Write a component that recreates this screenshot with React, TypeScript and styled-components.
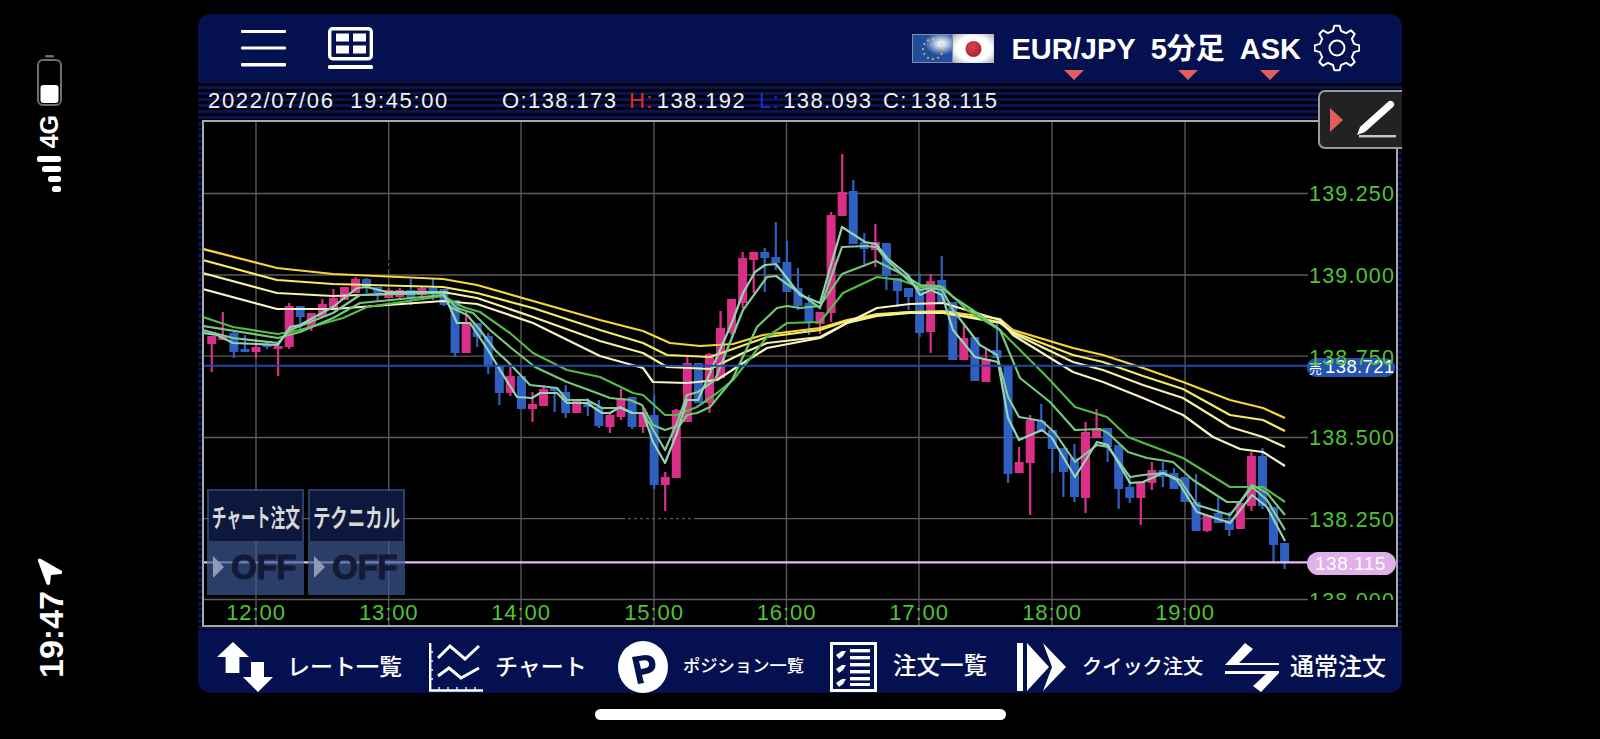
import React from "react";
import styled, { createGlobalStyle } from "styled-components";

const NAVY = "#04104f";
const SANS = '"Liberation Sans", Arial, sans-serif';
const JP = '"Liberation Sans", "Noto Sans CJK JP", sans-serif';

const Global = createGlobalStyle`
  html, body { margin: 0; padding: 0; background: #000; }
  #root { width: 1600px; height: 739px; overflow: hidden; }
`;

const Page = styled.div`
  width: 1600px;
  height: 739px;
  background: #000;
  display: flex;
  color: #fff;
  font-family: ${SANS};
`;

const StatusRail = styled.div`
  width: 198px;
  flex: none;
  display: flex;
  flex-direction: column;
  padding: 54px 0 61px 37px;
  box-sizing: border-box;
`;

const RailTime = styled.div`
  writing-mode: vertical-rl;
  transform: rotate(180deg);
  font-size: 34px;
  font-weight: 700;
  line-height: 26px;
  width: 26px;
  margin-top: 5px;
  margin-left: 1px;
`;

const RailNet = styled.div`
  writing-mode: vertical-rl;
  transform: rotate(180deg);
  font-size: 25px;
  font-weight: 700;
  line-height: 24px;
  width: 24px;
  margin-top: 9px;
`;

const Center = styled.div`
  width: 1204px;
  flex: none;
  display: flex;
  flex-direction: column;
  align-items: center;
  padding-top: 14px;
  box-sizing: border-box;
`;

const Panel = styled.div`
  position: relative;
  width: 1204px;
  height: 679px;
  flex: none;
  display: flex;
  flex-direction: column;
  border-radius: 13px;
  overflow: hidden;
  background: repeating-linear-gradient(180deg, #0a1550 0 3px, #02030f 3px 6px);
`;

const HomeBar = styled.div`
  width: 411px;
  height: 11px;
  border-radius: 6px;
  background: #fff;
  margin-top: 16px;
  flex: none;
`;

const Header = styled.header`
  height: 68px;
  flex: none;
  background: ${NAVY};
  display: flex;
  align-items: center;
  padding: 0 42px 0 43px;
`;

const HeaderIcons = styled.div`
  display: flex;
  align-items: center;
  gap: 42px;
  margin-right: auto;
`;

const Selector = styled.div<{ $ml: number }>`
  position: relative;
  font-size: 29px;
  font-weight: 700;
  font-family: ${JP};
  line-height: 34px;
  margin-left: ${(p) => p.$ml}px;
  top: 1px;
  white-space: nowrap;
  &::after {
    content: "";
    position: absolute;
    left: 50%;
    top: 38px;
    transform: translateX(-50%);
    border-left: 10px solid transparent;
    border-right: 10px solid transparent;
    border-top: 10px solid #df5f5a;
  }
`;

const GearSlot = styled.div`
  margin-left: 13px;
  display: flex;
`;

const InfoStrip = styled.div`
  height: 38px;
  flex: none;
  display: flex;
  align-items: center;
  padding: 0 0 0 10px;
  font-size: 22px;
  letter-spacing: 1.4px;
  white-space: pre;
  color: #f2f2f2;
`;

const InfoCell = styled.span<{ $w: number; $ls?: number }>`
  display: inline-block;
  width: ${(p) => p.$w}px;
  flex: none;
  ${(p) => (p.$ls ? `letter-spacing: ${p.$ls}px;` : "")}
`;

const Mark = styled.span<{ $c: string }>`
  color: ${(p) => p.$c};
  margin-right: 3px;
`;

const PenButton = styled.div`
  position: absolute;
  right: -8px;
  top: 76px;
  width: 92px;
  height: 59px;
  box-sizing: border-box;
  background: #222;
  border: 2px solid #9a9a9a;
  border-radius: 7px;
  display: flex;
  align-items: center;
  padding-left: 10px;
  gap: 13px;
`;

const PenCaret = styled.div`
  width: 0;
  height: 0;
  border-top: 12px solid transparent;
  border-bottom: 12px solid transparent;
  border-left: 13px solid #df5f5a;
`;

const ChartFrame = styled.div`
  position: relative;
  margin: 0 4px;
  width: 1196px;
  height: 507px;
  flex: none;
  box-sizing: border-box;
  border: 2px solid #a8a8a8;
  background: #000;
  & > svg { display: block; }
`;

const Toggles = styled.div`
  position: absolute;
  left: 3px;
  top: 367px;
  display: flex;
  gap: 4px;
`;

const Toggle = styled.div`
  width: 97px;
  height: 106px;
  box-sizing: border-box;
  display: flex;
  flex-direction: column;
  background: rgba(62, 92, 152, 0.68);
  padding: 2px;
`;

const ToggleTitle = styled.div<{ $sx: number }>`
  height: 50px;
  flex: none;
  background: rgba(10, 20, 55, 0.9);
  display: flex;
  align-items: center;
  justify-content: center;
  overflow: hidden;
  & > span {
    font-family: ${JP};
    font-weight: 700;
    font-size: 21px;
    color: #d8d8d8;
    white-space: nowrap;
    transform: scale(${(p) => p.$sx}, 1.2);
  }
`;

const ToggleState = styled.div`
  flex: 1;
  display: flex;
  align-items: center;
  padding-left: 4px;
  gap: 7px;
  & > b {
    font-family: ${SANS};
    font-size: 35px;
    font-weight: 700;
    color: #121a36;
    -webkit-text-stroke: 1px #121a36;
    letter-spacing: -0.5px;
    transform: scaleX(0.95);
    transform-origin: left;
  }
`;

const ToggleCaret = styled.div`
  width: 0;
  height: 0;
  border-top: 11px solid transparent;
  border-bottom: 11px solid transparent;
  border-left: 11px solid #8d9ab8;
`;

const Footer = styled.nav`
  margin-top: 3px;
  flex: 1;
  box-sizing: border-box;
  background: ${NAVY};
  display: flex;
  align-items: center;
  padding: 11px 0 0 19px;
`;

const NavItem = styled.div<{ $w: number; $gap: number }>`
  width: ${(p) => p.$w}px;
  flex: none;
  display: flex;
  align-items: center;
  gap: ${(p) => p.$gap}px;
`;

const NavLabel = styled.span<{ $s: number }>`
  font-family: ${JP};
  font-size: ${(p) => p.$s}px;
  font-weight: 500;
  line-height: 1;
  white-space: nowrap;
  color: #fff;
`;

/* ------- chart data (screen pixels of the reference) ------- */
type C = ["p" | "b", number, number, number, number];
const CANDLES: C[] = [
  ["p",336,336,344,372],["p",312,337,340,340],["b",330,333,352,358],["b",335,349,352,352],["p",339,347,352,358],
  ["b",342,345,347,349],["p",346,346,349,376],["p",303,306,347,349],["b",306,306,317,333],["p",313,313,327,331],
  ["p",299,304,317,317],["p",289,298,308,308],["p",287,287,300,300],["p",277,279,293,293],["b",278,279,287,293],
  ["b",287,287,293,301],["p",288,290,298,298],["p",288,290,297,300],["b",279,290,298,305],["p",287,288,295,297],
  ["b",279,288,293,300],["b",289,289,305,306],["b",300,300,353,357],["p",312,323,353,353],["b",323,323,337,347],
  ["b",333,336,367,374],["b",365,365,393,405],["p",367,376,393,396],["b",376,376,409,409],["p",392,404,409,422],
  ["p",385,389,406,406],["b",388,388,391,412],["b",385,392,413,418],["p",400,400,413,413],["b",398,402,407,416],
  ["b",400,407,426,428],["p",413,415,427,433],["p",389,398,417,420],["b",397,397,427,429],["p",408,412,427,433],
  ["b",395,415,485,489],["p",472,477,485,511],["p",409,410,478,478],["p",357,363,422,422],["b",363,363,403,403],
  ["p",353,354,403,413],["p",311,328,378,378],["p",299,299,333,335],["p",252,258,303,308],["p",252,252,260,293],
  ["b",248,252,258,292],["b",222,257,263,270],["b",241,262,292,292],["b",268,288,306,310],["b",295,303,322,335],
  ["p",312,312,324,334],["p",212,215,313,322],["p",154,192,216,216],["b",180,191,244,244],["b",233,242,249,264],
  ["p",224,242,250,267],["b",243,243,276,290],["b",278,278,291,307],["b",288,288,297,310],["b",273,287,333,337],
  ["p",274,281,332,353],["b",256,280,303,303],["b",302,302,360,360],["p",325,338,360,360],["b",337,337,381,381],
  ["p",349,359,382,382],["b",324,350,358,358],["b",366,366,474,483],["p",447,462,473,473],["p",415,420,463,515],
  ["b",404,421,432,432],["b",430,430,449,473],["b",448,448,472,497],["b",444,458,497,502],["p",422,432,498,513],
  ["p",409,429,438,438],["b",428,428,447,462],["b",445,445,489,509],["b",478,487,498,503],["p",482,482,498,525],
  ["p",462,470,483,490],["b",462,470,477,487],["b",468,473,489,489],["b",477,477,502,502],["b",474,502,531,531],
  ["p",515,515,531,532],["b",498,513,523,523],["b",512,520,530,536],["p",503,503,529,529],["p",452,456,506,511],
  ["b",448,456,506,509],["b",507,507,545,562],["b",543,543,562,569],
];

const Y1 = "203,249 277,268 333,274 443,279 477,285 533,301 600,320 643,331 670,343 700,346 733,344 763,335 820,328 847,320 877,314 910,312 943,311 1000,319 1013,330 1073,348 1103,355 1143,368 1183,382 1230,400 1263,408 1285,418";
const Y2 = "203,260 277,280 333,284 443,287 477,293 533,308 600,330 643,343 667,355 710,357 767,337 820,330 847,321 877,315 910,312 943,312 1000,322 1013,332 1073,355 1103,362 1143,376 1183,389 1230,415 1263,420 1285,431";
const Y3 = "203,273 277,293 333,296 443,292 477,298 533,317 600,341 643,353 667,367 710,369 743,353 767,343 820,337 847,323 877,316 910,313 943,313 1000,323 1013,333 1073,362 1103,370 1143,385 1183,398 1230,427 1263,437 1285,447";
const Y4 = "203,289 277,309 333,309 443,301 477,304 533,323 600,356 643,368 653,382 687,383 717,380 743,363 767,348 820,338 847,323 877,308 910,304 943,303 1000,320 1013,335 1073,372 1103,382 1143,398 1183,415 1213,437 1240,449 1263,452 1285,466";
const G1 = "203,317 233,327 278,334 300,330 343,318 367,307 443,296 463,307 480,312 510,333 533,353 567,370 600,377 633,393 643,395 665,415 677,415 697,407 717,393 733,380 767,337 787,323 820,322 843,293 877,277 900,280 920,287 943,287 967,310 1000,330 1013,343 1047,377 1075,407 1107,417 1128,437 1183,458 1230,487 1263,487 1285,502";
const G2 = "203,326 278,338 300,332 333,318 360,303 443,295 457,308 473,313 490,330 510,347 535,367 567,382 597,393 610,398 630,400 642,405 653,425 665,430 680,425 687,415 697,413 710,407 732,380 757,327 777,308 787,306 800,308 820,306 842,274 876,261 900,273 920,285 940,286 953,297 977,313 1000,330 1020,378 1050,402 1075,430 1100,429 1108,433 1128,452 1147,458 1173,462 1193,480 1227,502 1240,502 1252,485 1267,493 1285,515";
const G3 = "203,330 233,338 278,343 290,330 333,313 360,295 443,293 450,307 467,315 480,330 495,350 508,362 530,385 557,388 567,400 587,400 602,408 620,408 633,413 643,413 655,433 665,450 677,423 687,395 698,392 715,380 743,310 767,277 776,276 820,308 842,247 865,246 876,247 887,260 908,280 920,290 931,288 942,290 953,310 980,345 997,355 1008,397 1019,417 1042,421 1055,433 1075,462 1097,445 1108,447 1130,477 1143,475 1163,473 1180,480 1197,505 1230,515 1252,487 1267,500 1285,530";
const G4 = "203,333 217,335 233,343 278,345 290,327 300,325 333,307 357,288 367,287 387,292 443,292 457,323 470,323 488,350 500,370 517,397 532,398 540,393 557,393 567,403 587,403 602,413 610,413 620,407 632,413 643,413 653,442 665,463 677,433 687,400 698,400 707,380 733,320 743,293 755,272 765,265 776,264 800,295 820,303 842,227 865,242 876,244 887,258 908,275 920,295 931,290 942,295 953,330 975,357 998,362 1008,418 1019,440 1042,430 1052,438 1075,477 1097,442 1108,445 1130,483 1143,482 1163,473 1177,480 1197,512 1230,523 1252,495 1267,507 1285,541";

const GRID_X = [256, 388.7, 521, 654, 786.5, 919, 1052, 1185];
const GRID_Y = [193.5, 275, 356.2, 437.5, 518.7, 599.5];
const TIMES = ["12:00", "13:00", "14:00", "15:00", "16:00", "17:00", "18:00", "19:00"];
const PRICES: [string, number][] = [["139.250", 201], ["139.000", 283], ["138.750", 365], ["138.500", 445], ["138.250", 527]];

const AxisText = styled.text`
  font-family: ${SANS};
  font-size: 21.5px;
  letter-spacing: 1.2px;
  fill: #4fc433;
`;

const TimeText = styled.text`
  font-family: ${SANS};
  font-size: 22px;
  letter-spacing: 0.9px;
  fill: #4fc433;
  text-anchor: middle;
`;

const BadgeText = styled.text<{ $s: number; $ls: number }>`
  font-family: ${JP};
  font-size: ${(p) => p.$s}px;
  letter-spacing: ${(p) => p.$ls}px;
  fill: #fff;
`;

const ChartDrawing = () => (
  <svg width={1192} height={503} viewBox="204 122 1192 503">
    <defs>
      <clipPath id="axisClip"><rect x="204" y="122" width="1192" height="478" /></clipPath>
    </defs>
    {GRID_Y.map((y) => (
      <line key={y} x1={204} x2={1308} y1={y} y2={y} stroke="#5c5c5c" strokeWidth={1.3} />
    ))}
    {GRID_X.map((x) => (
      <line key={x} x1={x} x2={x} y1={122} y2={626} stroke="#5c5c5c" strokeWidth={1.3} />
    ))}
    <line x1={388.7} x2={388.7} y1={260} y2={270} stroke="#000" strokeWidth={2} strokeDasharray="3 3" />
    <line x1={625} x2={695} y1={518.7} y2={518.7} stroke="#000" strokeWidth={2} strokeDasharray="3 3" />
    {CANDLES.map(([c, wt, bt, bb, wb], idx) => {
      const x = 256 + 11.06 * (idx - 4);
      const fill = c === "p" ? "#d92f88" : "#2f5fc0";
      return (
        <g key={idx} fill={fill}>
          <rect x={x - 1.1} y={wt} width={2.2} height={wb - wt} />
          <rect x={x - 4.5} y={bt} width={9} height={Math.max(bb - bt, 1)} />
        </g>
      );
    })}
    <g fill="none" strokeWidth={2.2} strokeLinejoin="round">
      <polyline points={Y1} stroke="#f7d637" />
      <polyline points={Y2} stroke="#f2ec62" />
      <polyline points={Y3} stroke="#f4f2a0" />
      <polyline points={Y4} stroke="#f6f4c4" />
      <polyline points={G1} stroke="#55bb48" />
      <polyline points={G2} stroke="#74c878" />
      <polyline points={G3} stroke="#84cc9c" />
      <polyline points={G4} stroke="#93d4b4" />
    </g>
    <line x1={204} x2={1310} y1={365.7} y2={365.7} stroke="#1f4aa8" strokeWidth={2} />
    <line x1={204} x2={1310} y1={562.4} y2={562.4} stroke="#e4c0ee" strokeWidth={2.2} />
    <rect x={1307} y={358} width={88} height={19} rx={9} fill="#2354b0" />
    <BadgeText $s={13} $ls={0} x={1309} y={373}>売</BadgeText>
    <BadgeText $s={18.5} $ls={0.4} x={1325} y={373}>138.721</BadgeText>
    <rect x={1307} y={552} width={89} height={23} rx={11.5} fill="#e0b0ea" />
    <BadgeText $s={19} $ls={0.5} x={1315} y={570}>138.115</BadgeText>
    <g clipPath="url(#axisClip)">
      {PRICES.map(([t, y]) => (
        <AxisText key={t} x={1309} y={y}>{t}</AxisText>
      ))}
      <AxisText x={1309} y={608}>138.000</AxisText>
    </g>
    {TIMES.map((t, i) => (
      <TimeText key={t} x={GRID_X[i]} y={620}>{t}</TimeText>
    ))}
  </svg>
);

/* ------- icons ------- */
const gearPath = (() => {
  const cx = 23, cy = 24, ro = 22.5, ri = 17.5, n = 8;
  let d = "";
  for (let i = 0; i < n; i++) {
    const a = (i / n) * Math.PI * 2 - Math.PI / 2;
    const s = (Math.PI * 2) / n;
    const pts: [number, number][] = [
      [ri, a - s * 0.3], [ro, a - s * 0.15], [ro, a + s * 0.15], [ri, a + s * 0.3],
    ];
    pts.forEach(([r, t], j) => {
      d += `${i === 0 && j === 0 ? "M" : "L"}${(cx + r * Math.cos(t)).toFixed(2)} ${(cy + r * Math.sin(t)).toFixed(2)} `;
    });
  }
  return d + "Z";
})();

const GearIcon = () => (
  <svg width={46} height={48} viewBox="0 0 46 48" fill="none" stroke="#fff" strokeWidth={2} strokeLinejoin="round">
    <path d={gearPath} />
    <circle cx={23} cy={24} r={7.5} />
  </svg>
);

const MenuIcon = () => (
  <svg width={45} height={38} viewBox="0 0 45 38" fill="#fff">
    <rect y={1} width={45} height={3} rx={1} />
    <rect y={17.5} width={45} height={3} rx={1} />
    <rect y={34} width={45} height={3.4} rx={1} />
  </svg>
);

const LayoutIcon = () => (
  <svg width={45} height={43} viewBox="0 0 45 43">
    <rect x={1.7} y={1.7} width={41.6} height={30} rx={3} fill="none" stroke="#fff" strokeWidth={3.4} />
    <g fill="#fff">
      <rect x={8} y={6.5} width={13} height={8} />
      <rect x={25} y={6.5} width={13} height={8} />
      <rect x={8} y={18.5} width={13} height={8} />
      <rect x={25} y={18.5} width={13} height={8} />
      <rect x={0} y={38} width={45} height={4} rx={1.5} />
    </g>
  </svg>
);

const FlagsIcon = () => {
  const stars = Array.from({ length: 12 }, (_, i) => {
    const a = (i / 12) * Math.PI * 2;
    return [21 + 10 * Math.cos(a), 15 + 10 * Math.sin(a)];
  });
  return (
    <svg width={82} height={29} viewBox="0 0 82 29" style={{ display: "block" }}>
      <defs>
        <radialGradient id="euGlow" cx="0.72" cy="0.32" r="0.42">
          <stop offset="0" stopColor="#ffffff" />
          <stop offset="0.3" stopColor="#c9d6ec" />
          <stop offset="1" stopColor="#224c9e" />
        </radialGradient>
        <radialGradient id="jpGlow" cx="0.5" cy="0.5" r="0.7">
          <stop offset="0.6" stopColor="#ffffff" />
          <stop offset="1" stopColor="#a9a9a9" />
        </radialGradient>
        <radialGradient id="jpSun" cx="0.4" cy="0.35" r="0.8">
          <stop offset="0" stopColor="#d8434f" />
          <stop offset="1" stopColor="#a81a30" />
        </radialGradient>
      </defs>
      <rect x={0.5} y={0.5} width={40} height={28} fill="url(#euGlow)" stroke="#7c8cb0" />
      {stars.map(([x, y], i) => (
        <circle key={i} cx={x} cy={y} r={1} fill="#e2c443" />
      ))}
      <rect x={41} y={0} width={41} height={29} fill="url(#jpGlow)" />
      <circle cx={61.5} cy={15} r={8} fill="url(#jpSun)" />
    </svg>
  );
};

const PenIcon = () => (
  <svg width={41} height={40} viewBox="0 0 41 40">
    <path d="M1 35 L4 27 L33 1 Q36 0 38 3 Q39 5 37 7 L9 32 Z" fill="#fff" />
    <rect x={3} y={35} width={37} height={2.4} fill="#c9c9c9" />
  </svg>
);

const RateIcon = () => (
  <svg width={56} height={50} viewBox="0 0 56 50" fill="#fff">
    <path d="M16 0 L32 15 L22.4 15 L22.4 31 L8.6 31 L8.6 15 L0 15 Z" />
    <path d="M41 50 L26 35 L34 35 L34 20 L47 20 L47 35 L56 35 Z" />
  </svg>
);

const ChartIcon = () => (
  <svg width={54} height={49} viewBox="0 0 54 49" fill="none" stroke="#fff">
    <path d="M1.2 0 V47.5 H54" strokeWidth={2.4} />
    <path d="M1 9h3M1 18h3M1 27h3M1 36h3M10 47v-3M19 47v-3M28 47v-3M37 47v-3M46 47v-3" strokeWidth={1.3} />
    <path d="M9 15 L21 3 L36 16 L50 3" strokeWidth={3} />
    <path d="M9 33 L20 25 L32 35 L50 25" strokeWidth={3} />
  </svg>
);

const PositionIcon = () => (
  <svg width={50} height={52} viewBox="0 0 50 52">
    <ellipse cx={25} cy={26} rx={25} ry={26} fill="#fff" />
    <path
      fillRule="evenodd"
      fill={NAVY}
      d="M14 16 L27 14 Q37 14 37.5 23 Q38 31 28 33 L24 34 L26 42 L20 43 Z M21 20 L23 28 L27 27.3 Q31.5 26.5 31 23 Q30.5 19 26.5 19.3 Z"
    />
  </svg>
);

const ListIcon = () => (
  <svg width={47} height={50} viewBox="0 0 47 50">
    <rect x={1.5} y={1.5} width={44} height={47} fill="none" stroke="#fff" strokeWidth={3} />
    <g fill="#fff">
      <rect x={20} y={7} width={20} height={3.4} />
      <rect x={20} y={14} width={20} height={3.4} />
      <rect x={20} y={21} width={20} height={3.4} />
      <rect x={20} y={28} width={20} height={3.4} />
      <rect x={20} y={35} width={20} height={3.4} />
      <rect x={20} y={41} width={20} height={3} />
      <path d="M6 13 L12 9 L16 9 L13 14 L9 17 Z" />
      <path d="M6 27 L12 23 L16 23 L13 28 L9 31 Z" />
      <path d="M6 41 L12 37 L16 37 L13 42 L9 45 Z" />
    </g>
  </svg>
);

const QuickIcon = () => (
  <svg width={49} height={48} viewBox="0 0 49 48" fill="#fff">
    <rect x={0} y={0} width={6} height={48} />
    <path d="M10 0 L32 24 L10 48 Z" />
    <path d="M26 0 L49 24 L26 48 L35 24 Z" />
  </svg>
);

const OrderIcon = () => (
  <svg width={55} height={49} viewBox="0 0 55 49" fill="#fff">
    <path d="M20 0 L28 6 L14 20 L54 20 L54 22 L0 22 Z" />
    <path d="M0 28 L54 28 L54 30 L36 49 L28 43 L41 31 L0 31 Z" />
  </svg>
);

const BatteryIcon = () => (
  <svg width={25} height={52} viewBox="0 0 25 52" style={{ display: "block" }}>
    <rect x={8} y={1} width={9} height={2.5} rx={1.2} fill="#6a6a6a" />
    <rect x={1} y={6} width={23} height={45} rx={5} fill="none" stroke="#6f6f6f" strokeWidth={2} />
    <rect x={3.5} y={31} width={18} height={18} rx={3} fill="#fff" />
  </svg>
);

const SignalIcon = () => (
  <svg width={24} height={36} viewBox="0 0 24 36" fill="#fff" style={{ display: "block" }}>
    <rect x={0} y={0} width={24} height={6} rx={2.5} />
    <rect x={5} y={10} width={19} height={6} rx={2.5} />
    <rect x={11} y={20} width={13} height={6} rx={2.5} />
    <rect x={15} y={30} width={9} height={6} rx={2.5} />
  </svg>
);

const ArrowIcon = () => (
  <svg width={25} height={28} viewBox="0 0 25 28" fill="#fff" style={{ display: "block" }}>
    <path d="M1 3 Q0 0 4 1 L25 13 Q26 15 24 16 L14 17 L13 26 Q11 28 9.5 26 Z" strokeLinejoin="round" />
  </svg>
);

const NetGroup = styled.div`
  display: flex;
  flex-direction: column;
  align-items: flex-start;
`;

const SignalSlot = styled.div`
  margin-top: 8px;
`;

const TimeGroup = styled.div`
  margin-top: auto;
  display: flex;
  flex-direction: column;
  align-items: flex-start;
`;

export default function App() {
  return (
    <Page>
      <Global />
      <StatusRail>
        <NetGroup>
          <BatteryIcon />
          <RailNet>4G</RailNet>
          <SignalSlot><SignalIcon /></SignalSlot>
        </NetGroup>
        <TimeGroup>
          <ArrowIcon />
          <RailTime>19:47</RailTime>
        </TimeGroup>
      </StatusRail>
      <Center>
        <Panel>
          <Header>
            <HeaderIcons>
              <MenuIcon />
              <LayoutIcon />
            </HeaderIcons>
            <FlagsIcon />
            <Selector $ml={18}>EUR/JPY</Selector>
            <Selector $ml={15}>5分足</Selector>
            <Selector $ml={15}>ASK</Selector>
            <GearSlot><GearIcon /></GearSlot>
          </Header>
          <InfoStrip>
            <InfoCell $w={294} $ls={1.65}>2022/07/06  19:45:00</InfoCell>
            <InfoCell $w={127}>O:138.173</InfoCell>
            <InfoCell $w={130}><Mark $c="#e02a22">H:</Mark>138.192</InfoCell>
            <InfoCell $w={124}><Mark $c="#1230d0">L:</Mark>138.093</InfoCell>
            <InfoCell $w={130}><Mark $c="#f2f2f2">C:</Mark>138.115</InfoCell>
          </InfoStrip>
          <ChartFrame>
            <ChartDrawing />
            <Toggles>
              <Toggle>
                <ToggleTitle $sx={0.7}><span>チャート注文</span></ToggleTitle>
                <ToggleState><ToggleCaret /><b>OFF</b></ToggleState>
              </Toggle>
              <Toggle>
                <ToggleTitle $sx={0.83}><span>テクニカル</span></ToggleTitle>
                <ToggleState><ToggleCaret /><b>OFF</b></ToggleState>
              </Toggle>
            </Toggles>
          </ChartFrame>
          <Footer>
            <NavItem $w={212} $gap={14}><RateIcon /><NavLabel $s={23}>レート一覧</NavLabel></NavItem>
            <NavItem $w={189} $gap={12}><ChartIcon /><NavLabel $s={23}>チャート</NavLabel></NavItem>
            <NavItem $w={212} $gap={15}><PositionIcon /><NavLabel $s={17.3}>ポジション一覧</NavLabel></NavItem>
            <NavItem $w={187} $gap={16}><ListIcon /><NavLabel $s={23.5}>注文一覧</NavLabel></NavItem>
            <NavItem $w={208} $gap={16}><QuickIcon /><NavLabel $s={20.2}>クイック注文</NavLabel></NavItem>
            <NavItem $w={177} $gap={10}><OrderIcon /><NavLabel $s={24}>通常注文</NavLabel></NavItem>
          </Footer>
          <PenButton>
            <PenCaret />
            <PenIcon />
          </PenButton>
        </Panel>
        <HomeBar />
      </Center>
    </Page>
  );
}
